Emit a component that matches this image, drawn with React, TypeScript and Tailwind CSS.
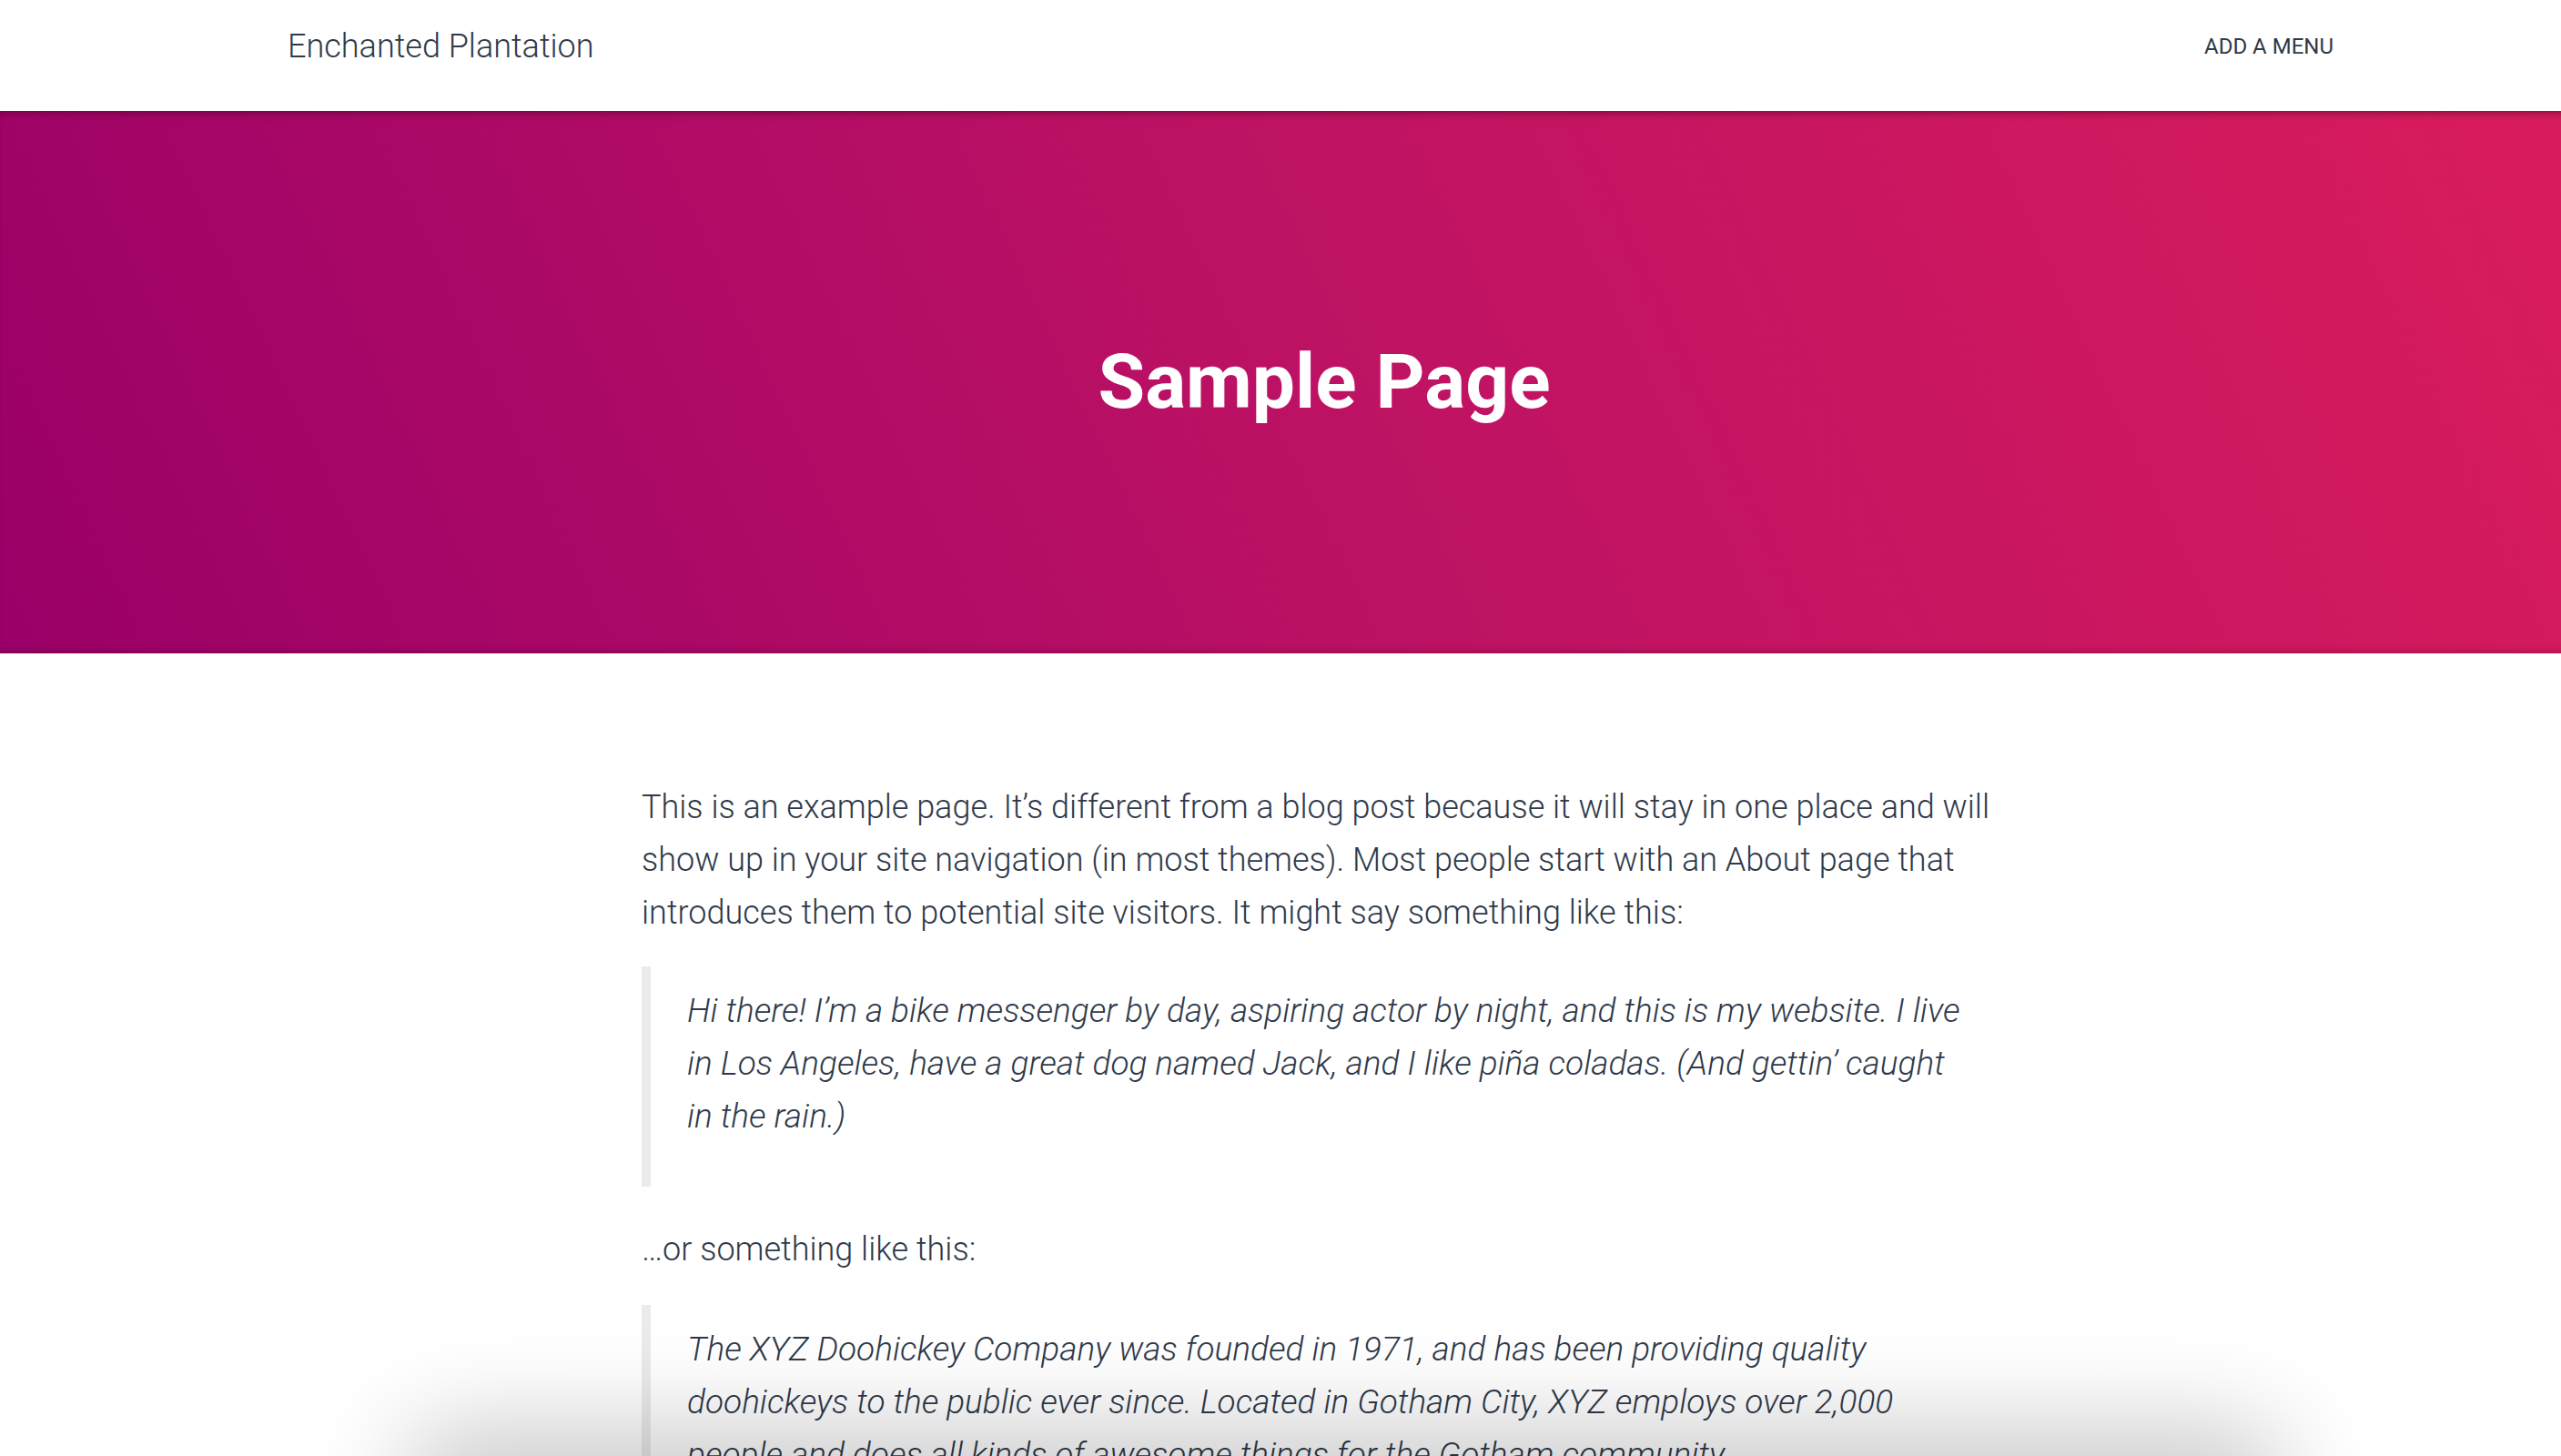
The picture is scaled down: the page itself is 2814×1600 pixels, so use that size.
const paragraphs = {
  intro:
    "This is an example page. It’s different from a blog post because it will stay in one place and will show up in your site navigation (in most themes). Most people start with an About page that introduces them to potential site visitors. It might say something like this:",
  quote1:
    "Hi there! I’m a bike messenger by day, aspiring actor by night, and this is my website. I live in Los Angeles, have a great dog named Jack, and I like piña coladas. (And gettin’ caught in the rain.)",
  between: "…or something like this:",
  quote2:
    "The XYZ Doohickey Company was founded in 1971, and has been providing quality doohickeys to the public ever since. Located in Gotham City, XYZ employs over 2,000 people and does all kinds of awesome things for the Gotham community.",
};

function Quote({ text }: { text: string }) {
  return (
    <blockquote className="border-l-[10px] border-[#ebebec] pl-10 pr-12 pt-5 pb-12 mb-10">
      <p className="italic text-[37px]">{text}</p>
    </blockquote>
  );
}

export default function App() {
  return (
    <div className="w-full min-h-screen overflow-hidden bg-white font-['Roboto',sans-serif] text-[#2e394a]">
      <div className="w-[2880px]">
        <header className="h-[122px] pb-[20px] flex items-center">
          <div className="w-[2248px] mx-auto flex items-center justify-between">
            <span className="text-[36px] font-light">Enchanted Plantation</span>
            <span className="text-[24px] font-normal">ADD A MENU</span>
          </div>
        </header>

        <section className="h-[596px] flex items-center justify-center bg-linear-[65deg] from-[#9a0068] via-[#bd1264] to-[#da1c5c] shadow-[inset_0_10px_8px_-8px_rgba(60,0,30,0.55),inset_0_-8px_8px_-7px_rgba(60,0,30,0.35)]">
          <h1 className="text-[84px] font-bold text-white leading-none pl-[30px]">Sample Page</h1>
        </section>

        <main className="pt-[140px] pb-[200px]">
          <div className="w-[1500px] ml-[705px] text-[36px] font-light leading-[58px]">
            <p className="mb-[30px]">{paragraphs.intro}</p>
            <Quote text={paragraphs.quote1} />
            <p className="mb-[32px]">{paragraphs.between}</p>
            <Quote text={paragraphs.quote2} />
          </div>
        </main>
      </div>

      <div className="fixed top-full left-[470px] right-[330px] h-[60px] rounded-[60px] bg-white shadow-[0_0_110px_30px_rgba(0,0,0,0.22)]" />
    </div>
  );
}
